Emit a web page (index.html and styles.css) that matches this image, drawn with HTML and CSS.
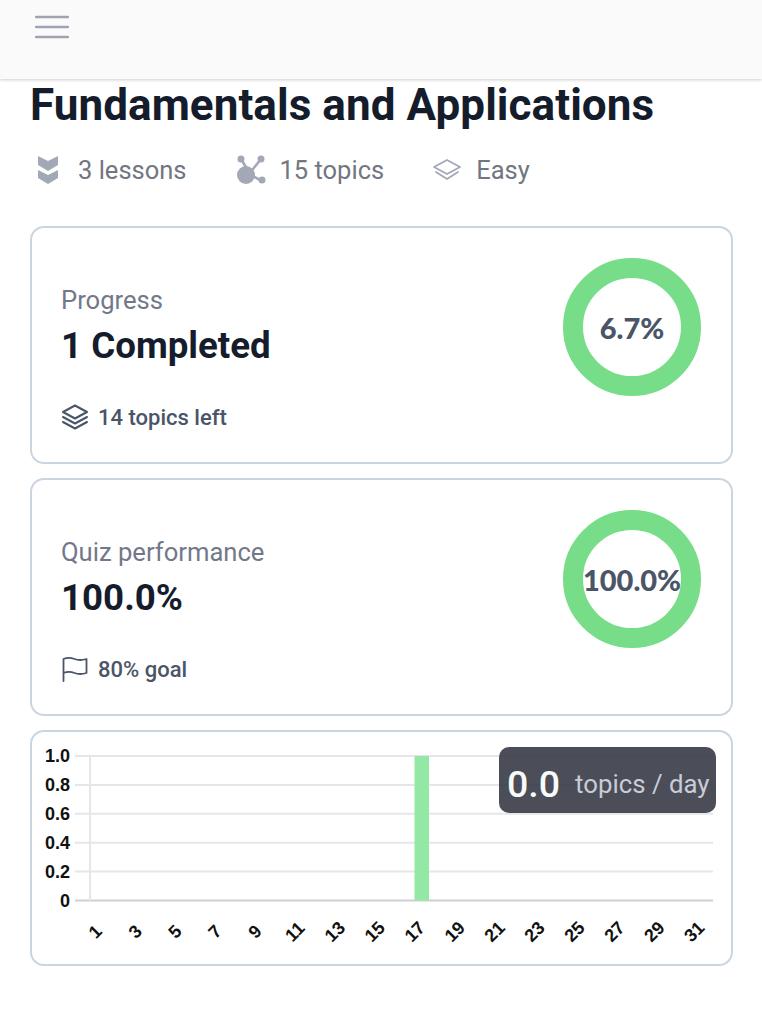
FILE: index.html
```html
<!DOCTYPE html>
<html lang="en">
  <head>
    <meta charset="UTF-8" />
    <meta name="viewport" content="width=device-width, initial-scale=1.0" />
    <title>Fundamentals and Applications</title>
    <link rel="stylesheet" href="styles.css">
  </head>

  <body>
    <header class="topbar">
      <svg class="menu-icon" viewBox="0 0 34 24" width="34" height="24">
        <path d="M1 2h32M1 12h32M1 22h32" fill="none" stroke="#a0a4b0" stroke-width="2.4" stroke-linecap="round" />
      </svg>
    </header>
    <main class="content">
      <h1 class="title">Fundamentals and Applications</h1>
      <div class="meta">
        <span class="meta-item meta-lessons">
          <svg viewBox="0 0 20 28" width="20" height="28">
            <path d="M0 0l10 5 10-5v9l-10 6-10-6zM0 14l10 5 10-5v8l-10 6-10-6z" fill="#a3a8b6" />
          </svg>
          3 lessons
        </span>
        <span class="meta-item meta-topics">
          <svg viewBox="0 0 30 30" width="30" height="30">
            <path d="M5 4l8 13M25 4l-12 15M13 19l13 7" fill="none" stroke="#a3a8b6" stroke-width="2.6" />
            <circle cx="5" cy="4" r="3.5" fill="#a3a8b6" />
            <circle cx="25" cy="4" r="3.5" fill="#a3a8b6" />
            <circle cx="26" cy="25" r="3.5" fill="#a3a8b6" />
            <circle cx="10" cy="20" r="9" fill="#a3a8b6" />
          </svg>
          15 topics
        </span>
        <span class="meta-item meta-level">
          <svg viewBox="0 0 28 22" width="28" height="22">
            <path d="M14 1l13 7-13 7-13-7z M3 13l11 7 11-7" fill="none" stroke="#a3a8b6" stroke-width="1.8" stroke-linejoin="round" stroke-linecap="round" />
          </svg>
          Easy
        </span>
      </div>

      <section class="card">
        <div class="card-text">
          <div class="card-label">Progress</div>
          <div class="card-value">1 Completed</div>
          <div class="card-note">
            <svg viewBox="0 0 28 26" width="28" height="26">
              <path d="M14 1.500l12 6.500-12 6.500-12-6.500zM2 13l12 6.500 12-6.500M2 18l12 6.500 12-6.500" fill="none" stroke="#4a5568" stroke-width="2" stroke-linejoin="round" stroke-linecap="round" />
            </svg>
            14 topics left
          </div>
        </div>
        <div class="ring"><span>6.7%</span></div>
      </section>

      <section class="card">
        <div class="card-text">
          <div class="card-label">Quiz performance</div>
          <div class="card-value">100.0%</div>
          <div class="card-note">
            <svg viewBox="0 0 28 26" width="28" height="26">
              <path d="M2.500 25V3c4-1.500 7-1.500 11 0s7 1.500 12 0v14c-5 1.500-8 1.500-12 0s-7-1.500-11 0" fill="none" stroke="#4a5568" stroke-width="1.800" stroke-linejoin="round" stroke-linecap="round" />
            </svg>
            80% goal
          </div>
        </div>
        <div class="ring"><span>100.0%</span></div>
      </section>

      <section class="card card-chart">
        <svg class="chart" id="chart" viewBox="0 0 703 236" width="703" height="236"></svg>
        <div class="rate"><b>0.0</b><span>topics / day</span></div>
      </section>
    </main>

    <script>
      const chart = document.getElementById('chart')
      const top_y = 26
      const step_y = 28.9
      let html = ''
      const ticks = ['1.0', '0.8', '0.6', '0.4', '0.2', '0']
      ticks.forEach((t, i) => {
        const y = top_y + step_y * i
        const color = i === 5 ? '#cfd0d4' : '#e6e6e8'
        html += `<line x1="45" x2="683" y1="${y}" y2="${y}" stroke="${color}" stroke-width="2" />`
        html += `<text class="tick" x="40" y="${y + 6}" text-anchor="end">${t}</text>`
      })
      html += `<line x1="60" x2="60" y1="${top_y}" y2="${top_y + step_y * 5}" stroke="#e6e6e8" stroke-width="2" />`
      html += `<rect x="384.500" y="${top_y}" width="14.500" height="${step_y * 5}" fill="#93e8a6" />`
      for (let d = 1; d <= 31; d += 2) {
        const x = 69.500 + (d - 1) * 19.97
        html += `<text class="tick" x="0" y="0" text-anchor="middle" transform="translate(${x} 206) rotate(-45)">${d}</text>`
      }
      chart.innerHTML = html
    </script>
  </body>
</html>
```

FILE: styles.css
```css
* {
  box-sizing: border-box;
}
body {
  margin: 0;
  background: #fff;
  font-family: Roboto, "Liberation Sans", sans-serif;
}
.topbar {
  height: 79px;
  padding: 15px 35px;
  background: #fafafa;
  box-shadow: 0 1px 3px rgba(0, 0, 0, 0.2);
}
.menu-icon {
  display: block;
}
.content {
  padding: 0 29px 0 30px;
}
.title {
  margin: 0;
  padding-top: 1px;
  font-size: 44px;
  line-height: 50px;
  font-weight: 700;
  letter-spacing: 0.07px;
  color: #151c2c;
}
.meta {
  display: flex;
  align-items: center;
  margin-top: 25px;
  height: 30px;
  font-size: 25.500px;
  color: #72767f;
}
.meta-item {
  display: flex;
  align-items: center;
}
.meta-lessons {
  padding-left: 8px;
  gap: 20px;
}
.meta-topics {
  margin-left: 49px;
  gap: 14px;
}
.meta-level {
  margin-left: 49px;
  gap: 15px;
}
.card {
  display: flex;
  align-items: flex-start;
  justify-content: space-between;
  height: 238px;
  margin-top: 14px;
  padding: 30px 30px 0 29px;
  border: 2px solid #cbd5e0;
  border-radius: 14px;
}
.meta + .card {
  margin-top: 41px;
}
.card-text {
  padding-top: 27px;
}
.card-label {
  font-size: 25.600px;
  line-height: 30px;
  color: #72788a;
}
.card-value {
  margin-top: 9px;
  font-size: 36.700px;
  line-height: 44px;
  font-weight: 700;
  color: #151c2c;
}
.card-note {
  display: flex;
  align-items: center;
  gap: 9px;
  margin-top: 36px;
  font-size: 22px;
  font-weight: 500;
  color: #4a5568;
}
.ring {
  display: flex;
  align-items: center;
  justify-content: center;
  width: 138px;
  height: 138px;
  border: 20px solid #77dd88;
  border-radius: 50%;
  font-family: Lato, sans-serif;
  font-size: 29px;
  font-weight: 900;
  color: #4a5568;
  white-space: nowrap;
}
.card-chart {
  position: relative;
  display: block;
  height: 236px;
  padding: 0;
  overflow: hidden;
}
.chart {
  display: block;
  margin: -2px;
}
.tick {
  font-family: "Liberation Sans", sans-serif;
  font-size: 18px;
  font-weight: 700;
  fill: #111;
}
.rate {
  position: absolute;
  top: 15px;
  right: 15px;
  display: flex;
  align-items: center;
  gap: 15px;
  height: 66px;
  width: 217px;
  padding: 8px 0 0 8px;
  background: rgba(60, 62, 74, 0.92);
  border-radius: 10px;
  font-size: 25.800px;
  color: #c8ccd6;
  white-space: nowrap;
}
.rate b {
  font-size: 37.500px;
  font-weight: 500;
  color: #f7fafc;
}
```
